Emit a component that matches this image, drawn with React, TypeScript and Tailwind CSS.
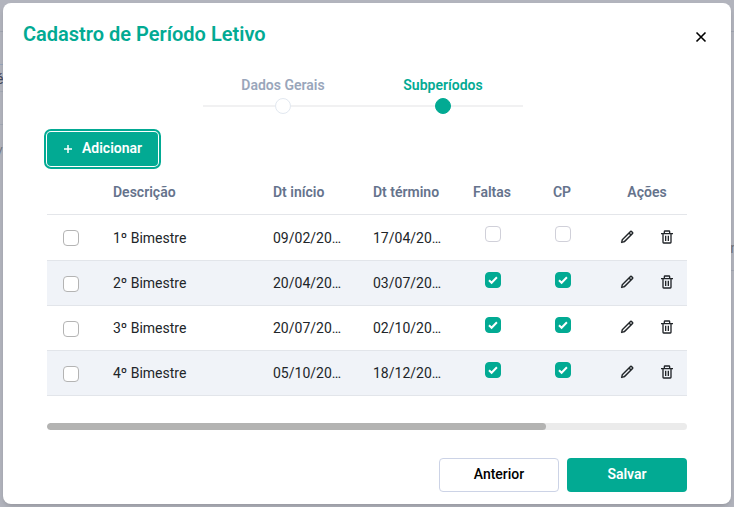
import { useState } from "react";
import { BiPencil, BiTrash } from "react-icons/bi";

type Subperiodo = {
  descricao: string;
  inicio: string;
  termino: string;
  faltas: boolean;
  cp: boolean;
};

const subperiodos: Subperiodo[] = [
  { descricao: "1º Bimestre", inicio: "09/02/20…", termino: "17/04/20…", faltas: false, cp: false },
  { descricao: "2º Bimestre", inicio: "20/04/20…", termino: "03/07/20…", faltas: true, cp: true },
  { descricao: "3º Bimestre", inicio: "20/07/20…", termino: "02/10/20…", faltas: true, cp: true },
  { descricao: "4º Bimestre", inicio: "05/10/20…", termino: "18/12/20…", faltas: true, cp: true },
];

function Flag({ label, initial }: { label: string; initial: boolean }) {
  const [checked, setChecked] = useState(initial);
  return (
    <label className="relative mx-auto mb-1.5 block size-4">
      <input
        type="checkbox"
        aria-label={label}
        checked={checked}
        onChange={() => setChecked(!checked)}
        className="peer block size-4 appearance-none rounded-sm border border-[#d0d0d9] bg-white checked:border-[#02aa93] checked:bg-[#02aa93]"
      />
      <svg
        viewBox="0 0 16 16"
        className="pointer-events-none absolute inset-0 hidden size-4 fill-none stroke-white stroke-2 peer-checked:block"
      >
        <path d="M4 8.3 6.6 10.8 11.9 5.3" />
      </svg>
    </label>
  );
}

function Step({ label, active }: { label: string; active: boolean }) {
  return (
    <li
      aria-current={active ? "step" : undefined}
      className={`flex w-40 flex-col items-center text-sm/5 font-semibold ${active ? "text-[#02aa93]" : "text-[#99a6bb]"}`}
    >
      {label}
      <span className="mt-[3px] flex w-full items-center">
        <span className="h-0.5 flex-1 bg-[#f1f1f2]" />
        <span
          className={`size-4 rounded-full border ${active ? "border-[#02aa93] bg-[#02aa93]" : "border-[#e2e8f0] bg-white"}`}
        />
        <span className="h-0.5 flex-1 bg-[#f1f1f2]" />
      </span>
    </li>
  );
}

export default function App() {
  return (
    <div className="relative min-h-screen bg-[#b2b4bd] p-[3px] font-['Roboto',sans-serif] text-sm text-[#212529]">
      <div aria-hidden="true" className="absolute inset-0 overflow-hidden">
        <div className="absolute top-[31px] h-px w-full bg-[#a0a5b1]" />
        <div className="absolute top-16 left-0 h-px w-1 bg-[#98a6bb]" />
        <div className="absolute top-[91px] left-0 h-px w-1 bg-[#a3a9b5]" />
        <div className="absolute top-[124px] left-0 h-px w-1 bg-[#a3a9b5]" />
        <div className="absolute top-[270px] right-0 h-px w-1 bg-[#a0a5b1]" />
        <span className="absolute top-[69px] -left-1 text-[#444a5e]">é</span>
        <span className="absolute top-[143px] -left-[3px] text-[#6f7480]">/</span>
        <span className="absolute top-[238px] -right-1 text-[#6f7480]">n</span>
      </div>

      <section
        role="dialog"
        aria-labelledby="titulo"
        className="relative rounded-lg bg-white pb-3 shadow-md"
      >
        <header className="flex items-start justify-between pt-[15px] pr-5 pl-5">
          <h1 id="titulo" className="text-xl/8 font-semibold text-[#02aa93]">
            Cadastro de Período Letivo
          </h1>
          <button type="button" aria-label="Fechar" className="mt-[9px] text-black">
            <svg viewBox="0 0 20 20" className="size-5 fill-none stroke-current stroke-[1.6]">
              <path d="m5.5 5.5 9 9m0-9-9 9" />
            </svg>
          </button>
        </header>

        <div className="px-11">
          <ol className="mt-[25px] mr-2 flex justify-center">
            <Step label="Dados Gerais" active={false} />
            <Step label="Subperíodos" active />
          </ol>

          <button
            type="button"
            className="mt-[18px] flex h-[34px] items-center rounded-sm bg-[#02aa93] pr-4 pb-0.5 pl-3.5 font-semibold text-white outline-2 outline-offset-1 outline-[#02aa93]"
          >
            <svg
              viewBox="0 0 14 14"
              aria-hidden="true"
              className="mt-0.5 mr-[7px] size-3.5 fill-none stroke-current stroke-[1.5]"
            >
              <path d="M7 3v8M3 7h8" />
            </svg>
            Adicionar
          </button>

          <table className="mt-[3px] w-full table-fixed border-collapse">
            <colgroup>
              <col className="w-[50px]" />
              <col />
              <col className="w-[100px]" />
              <col className="w-[100px]" />
              <col className="w-[70px]" />
              <col className="w-[70px]" />
              <col className="w-[90px]" />
            </colgroup>
            <thead>
              <tr className="h-[45px] border-b border-[#e4e6ea] text-left text-[#65738c] *:pt-0.5">
                <td />
                <th className="px-4 font-semibold">Descrição</th>
                <th className="px-4 font-semibold">Dt início</th>
                <th className="px-4 font-semibold whitespace-nowrap">Dt término</th>
                <th className="text-center font-semibold">Faltas</th>
                <th className="text-center font-semibold">CP</th>
                <th className="pl-2.5 text-center font-semibold">Ações</th>
              </tr>
            </thead>
            <tbody>
              {subperiodos.map((s) => (
                <tr
                  key={s.descricao}
                  className="h-[45px] border-b border-[#e2e5ea] first:h-[46px] even:bg-[#f0f3f8]"
                >
                  <td className="pt-0.5 pl-4">
                    <input
                      type="checkbox"
                      aria-label={`Selecionar ${s.descricao}`}
                      className="block size-4 appearance-none rounded-sm border border-[#b4b4b4] bg-white checked:bg-[#02aa93]"
                    />
                  </td>
                  <td className="px-4 pt-px">{s.descricao}</td>
                  <td className="px-4 pt-px whitespace-nowrap">{s.inicio}</td>
                  <td className="px-4 pt-px whitespace-nowrap">{s.termino}</td>
                  <td className="pl-0.5">
                    <Flag label={`Faltas ${s.descricao}`} initial={s.faltas} />
                  </td>
                  <td className="pl-0.5">
                    <Flag label={`CP ${s.descricao}`} initial={s.cp} />
                  </td>
                  <td className="pb-px pl-2.5">
                    <div className="flex text-[#212529]">
                      <button type="button" aria-label="Editar" className="flex w-10 justify-center">
                        <BiPencil className="size-4 stroke-[0.2]" />
                      </button>
                      <button type="button" aria-label="Excluir" className="flex w-10 justify-center">
                        <BiTrash className="size-4" />
                      </button>
                    </div>
                  </td>
                </tr>
              ))}
            </tbody>
          </table>

          <div className="mt-[27px] h-[7px] overflow-hidden rounded-full bg-[#ebebeb]">
            <div className="h-full w-[78%] rounded-full bg-[#b3b3b2]" />
          </div>

          <footer className="mt-7 flex justify-end gap-2">
            <button
              type="button"
              className="h-[34px] w-[120px] rounded-sm border border-[#ccd3e6] bg-white pb-0.5 font-medium text-black"
            >
              Anterior
            </button>
            <button
              type="button"
              className="h-[34px] w-[120px] rounded-sm bg-[#02aa93] pb-0.5 font-semibold text-white"
            >
              Salvar
            </button>
          </footer>
        </div>
      </section>
    </div>
  );
}
